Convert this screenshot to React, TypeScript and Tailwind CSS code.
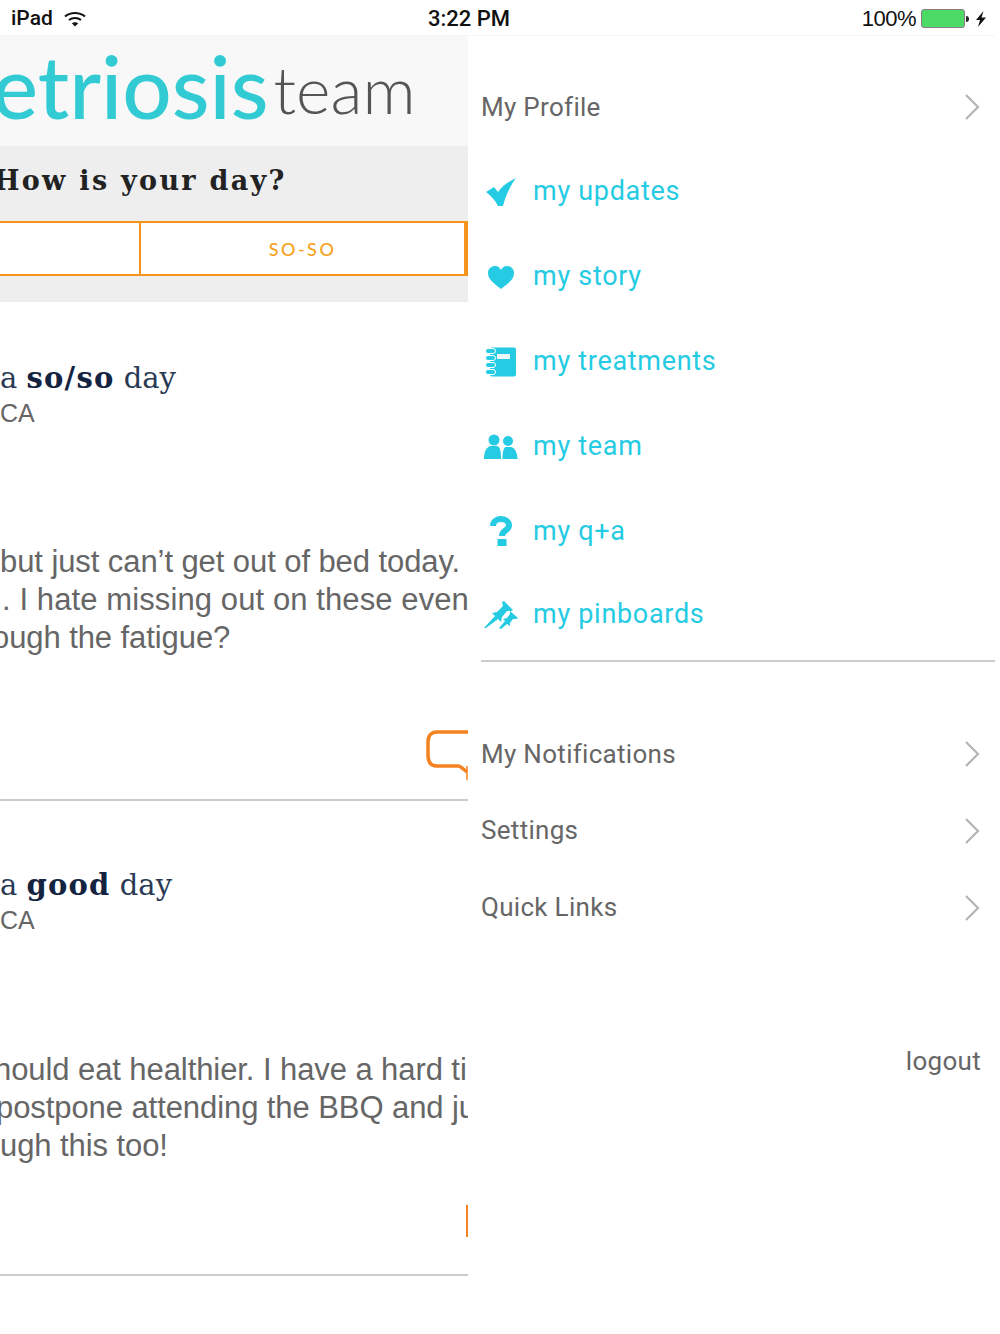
import type { ReactNode } from "react";

const cyan = "#25cbe3";

function WifiIcon() {
  return (
    <svg width="24" height="16" viewBox="0 0 24 16" fill="none" stroke="#111" strokeWidth="2.2">
      <path d="M2 5.5C8 .8 16 .8 22 5.5" />
      <path d="M6 9C9.5 6.3 14.5 6.3 18 9" />
      <path d="M12 15.5 8.8 12.2C10.6 10.8 13.4 10.8 15.2 12.2Z" fill="#111" stroke="none" />
    </svg>
  );
}

function BatteryIcon() {
  return (
    <div className="flex items-center">
      <div className="h-[19px] w-[44px] rounded-[3px] border border-[#8b7a8a] bg-[#4cd964] p-px" />
      <div className="ml-px h-[6px] w-[3px] rounded-r-full bg-[#222]" />
    </div>
  );
}

function BoltIcon() {
  return (
    <svg width="12" height="16" viewBox="0 0 12 16" fill="#111">
      <path d="M8.5 0 1 9h4l-2 7 8-9.5H6.5z" />
    </svg>
  );
}

function Chevron() {
  return (
    <svg width="16" height="28" viewBox="0 0 16 28" fill="none" stroke="#b5b5b5" strokeWidth="2.2">
      <path d="M2 2 14 14 2 26" />
    </svg>
  );
}

function CheckIcon() {
  return (
    <svg width="32" height="30" viewBox="0 0 32 30" fill={cyan}>
      <path d="M1 15 9 10 13 15C17 9 23 5 31 1 26 8 21 17 18 29L13 29C10 23 6 19 1 15Z" />
    </svg>
  );
}

function HeartIcon() {
  return (
    <svg width="28" height="24" viewBox="0 0 28 24" fill={cyan}>
      <path d="M14 24C8 19 1 15 1 8 1 3 5 1 8 1 11 1 13 3 14 5 15 3 17 1 20 1 23 1 27 3 27 8 27 15 20 19 14 24Z" />
    </svg>
  );
}

function NotebookIcon() {
  return (
    <svg width="32" height="30" viewBox="0 0 32 30">
      <rect x="5" y="0.5" width="26" height="29" rx="2" fill={cyan} />
      <rect x="12" y="7" width="13" height="5" fill="#eef7f9" />
      {[4, 11, 18, 25].map((y) => (
        <rect key={y} x="0.5" y={y - 2.5} width="10" height="5" rx="2.5" fill={cyan} stroke="#fff" strokeWidth="1" />
      ))}
    </svg>
  );
}

function PeopleIcon() {
  return (
    <svg width="34" height="26" viewBox="0 0 34 26" fill={cyan}>
      <circle cx="10" cy="6" r="5.5" />
      <path d="M0 25C0 18 2 13 7 12H13C16 13 17 16 17 25Z" />
      <circle cx="24" cy="7" r="5" />
      <path d="M18.5 25C18.5 19 19 15 21.5 13H27C31 14 33 18 33.5 25Z" />
    </svg>
  );
}

function QuestionIcon() {
  return (
    <svg width="24" height="30" viewBox="0 0 24 30" fill="none">
      <path d="M4 10C4 5.5 8 3 12 3 17 3 20 6 20 9.5 20 14.5 13 14 13 20" stroke={cyan} strokeWidth="6" />
      <rect x="8.5" y="23" width="9" height="7" fill={cyan} />
    </svg>
  );
}

function PinsIcon() {
  return (
    <svg width="36" height="28" viewBox="0 0 36 28" fill={cyan}>
      <path d="M1 27 12 15 9 12 14 11 20 5 19 1 21 0 30 9 28 10 24 10 19 16 18 21 15 18 3 27Z" />
      <path d="M16 27 22 20 20 18 24 17 27 13 27 10 35 17 33 18 30 18 27 22 27 25 24 23 18 28Z" />
    </svg>
  );
}

const links: { label: string; icon: ReactNode; row: string }[] = [
  { label: "my updates", icon: <CheckIcon />, row: "h-[85px]" },
  { label: "my story", icon: <HeartIcon />, row: "h-[85px]" },
  { label: "my treatments", icon: <NotebookIcon />, row: "h-[85px]" },
  { label: "my team", icon: <PeopleIcon />, row: "h-[85px]" },
  { label: "my q+a", icon: <QuestionIcon />, row: "h-[84px]" },
  { label: "my pinboards", icon: <PinsIcon />, row: "h-[83px]" },
];

function MenuRow({ label, className }: { label: string; className: string }) {
  return (
    <div className={`flex items-center justify-between pr-[15px] text-[26px] tracking-[0.3px] text-[#666] ${className}`}>
      <span>{label}</span>
      <Chevron />
    </div>
  );
}

function PostHead({ mood, top }: { mood: string; top: string }) {
  return (
    <div className={top}>
      <div className="h-[35px] whitespace-nowrap font-['DejaVu_Serif'] text-[29px] leading-[36px] text-[#2a3a55]">
        a <span className="font-bold tracking-[1.2px] text-[#14233f]">{mood}</span> day
      </div>
      <div className="h-[36px] font-['Liberation_Sans'] text-[25px] leading-[36px] text-[#666]">CA</div>
    </div>
  );
}

function BodyLines({ top, lines }: { top: string; lines: { text: string; className?: string }[] }) {
  return (
    <div className={`font-['Liberation_Sans'] text-[31px] leading-[38px] tracking-[-0.08px] text-[#666] ${top}`}>
      {lines.map((l) => (
        <div key={l.text} className={`whitespace-nowrap ${l.className ?? ""}`}>
          {l.text}
        </div>
      ))}
    </div>
  );
}

export default function App() {
  return (
    <div className="h-[1334px] w-[1000px] overflow-hidden bg-white font-['Roboto',sans-serif]">
      <div className="flex h-[35px] w-[995px] items-center pt-[2px] text-[#111]">
        <div className="flex w-[428px] items-center gap-[10px] pl-[11px] font-['Roboto'] text-[21px] font-medium">
          <span>iPad</span>
          <WifiIcon />
        </div>
        <span className="font-['Roboto'] text-[22px] font-medium">3:22 PM</span>
        <div className="flex flex-1 items-center justify-end gap-[5px] pr-[8px] font-['Liberation_Sans'] text-[22px]">
          <span className="tracking-[-0.5px]">100%</span>
          <div className="flex items-center gap-[6px]">
            <BatteryIcon />
            <BoltIcon />
          </div>
        </div>
      </div>

      <div className="flex w-[995px] items-start border-t border-[#f5f5f5]">
        <div className="h-[1298px] w-[468px] shrink-0 overflow-hidden">
          <div className="flex h-[110px] items-center bg-[#f8f8f8] pb-[11px] font-['Lato'] whitespace-nowrap">
            <span className="ml-[-8px] text-[87px] font-medium leading-none text-[#32cbd4]">etriosis</span>
            <span className="ml-[5px] mt-[6px] text-[66px] font-light leading-none text-[#555]">team</span>
          </div>

          <div className="h-[156px] bg-[#eeeeee] pt-[16px]">
            <div className="ml-[-6px] h-[40px] whitespace-nowrap font-['DejaVu_Serif'] text-[27px] font-bold leading-[38px] tracking-[2.3px] text-[#222]">
              How is your day?
            </div>
            <div className="mt-[19px] flex h-[55px] border-y-2 border-r-4 border-[#f7941e] bg-white">
              <div className="w-[141px] border-r-2 border-[#f7941e]" />
              <div className="flex flex-1 items-center justify-center pt-[1px] font-['Lato'] text-[18px] font-medium tracking-[2.5px] text-[#f7a11e]">
                SO-SO
              </div>
            </div>
          </div>

          <PostHead mood="so/so" top="pt-[58px]" />
          <BodyLines
            top="mt-[112px]"
            lines={[
              { text: "but just can’t get out of bed today. I" },
              { text: ". I hate missing out on these events", className: "ml-[2px] tracking-[0.1px]" },
              { text: "ough the fatigue?", className: "ml-[-8px]" },
            ]}
          />
          <div className="flex h-[142px] justify-end pt-[73px]">
            <svg width="42" height="52" viewBox="0 0 42 52" fill="none" stroke="#f58220" strokeWidth="3.5">
              <path d="M42 2H11C5 2 2 6 2 12V25C2 32 5 36 11 36H32C35 36 38 40 41 42" />
              <path d="M41 36V50" strokeWidth="1.5" />
            </svg>
          </div>
          <div className="h-[2px] bg-[#cccccc]" />

          <PostHead mood="good" top="pt-[66px]" />
          <BodyLines
            top="mt-[113px]"
            lines={[
              { text: "hould eat healthier. I have a hard ti", className: "ml-[-6px]" },
              { text: "postpone attending the BBQ and ju", className: "ml-[-4px]" },
              { text: "ugh this too!" },
            ]}
          />
          <div className="flex h-[109px] justify-end pt-[40px]">
            <div className="h-[32px] w-[2px] bg-[#f58220]" />
          </div>
          <div className="h-[2px] bg-[#cccccc]" />
        </div>

        <div className="min-w-0 flex-1 pl-[13px]">
          <MenuRow label="My Profile" className="mt-[29px] h-[84px]" />
          {links.map((l) => (
            <div key={l.label} className={`flex items-center text-[27px] tracking-[0.7px] text-[#25cbe3] ${l.row}`}>
              <div className="flex w-[40px] shrink-0 justify-center">{l.icon}</div>
              <span className="ml-[12px]">{l.label}</span>
            </div>
          ))}
          <div className="mt-[4px] h-[2px] bg-[#cccccc]" />
          <MenuRow label="My Notifications" className="mt-[54px] h-[76px]" />
          <MenuRow label="Settings" className="h-[77px]" />
          <MenuRow label="Quick Links" className="h-[77px]" />
          <div className="mt-[96px] pr-[14px] text-right text-[26px] tracking-[0.3px] text-[#666]">logout</div>
        </div>
      </div>
    </div>
  );
}
